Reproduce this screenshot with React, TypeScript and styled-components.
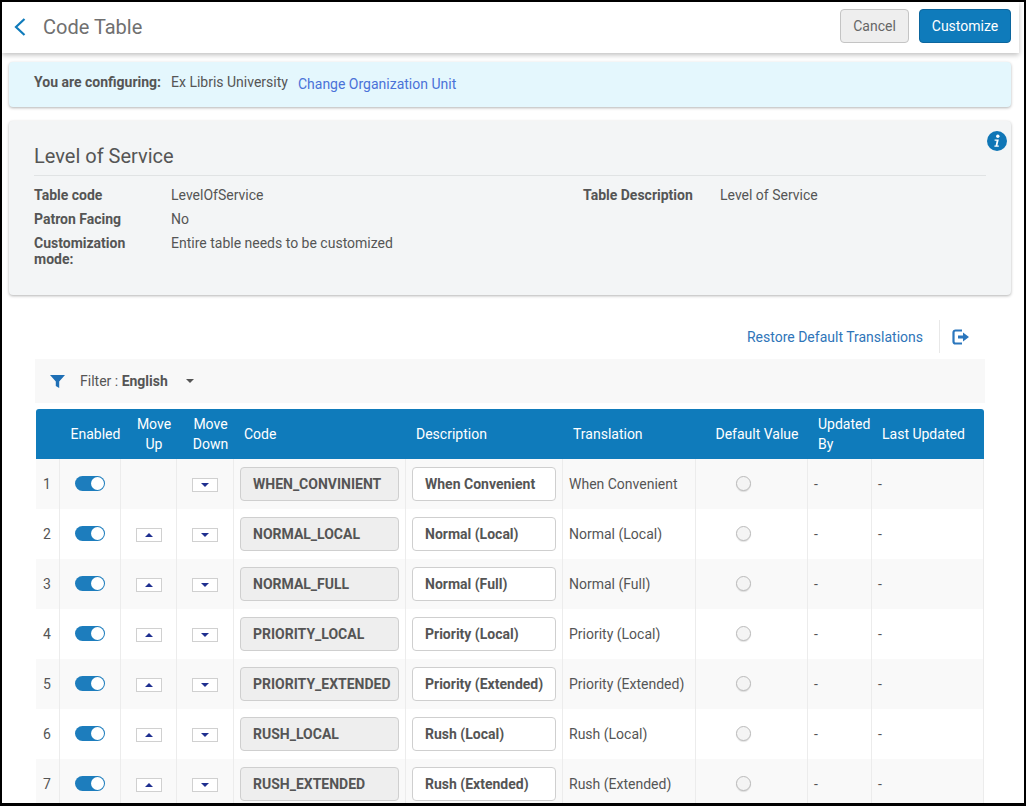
import React from "react"
import styled, { createGlobalStyle } from "styled-components"

const GlobalStyle = createGlobalStyle`
  html, body { margin: 0; padding: 0; background: #fff; }
  body { font-family: Roboto, "Liberation Sans", sans-serif; font-size: 14px; color: #555; }
  * { box-sizing: border-box; }
`

const rows = [
  { code: "WHEN_CONVINIENT", desc: "When Convenient", first: true },
  { code: "NORMAL_LOCAL", desc: "Normal (Local)" },
  { code: "NORMAL_FULL", desc: "Normal (Full)" },
  { code: "PRIORITY_LOCAL", desc: "Priority (Local)" },
  { code: "PRIORITY_EXTENDED", desc: "Priority (Extended)" },
  { code: "RUSH_LOCAL", desc: "Rush (Local)" },
  { code: "RUSH_EXTENDED", desc: "Rush (Extended)" },
]

const columnWidths = [24, 61, 56, 57, 172, 157, 133, 112, 64, 112]

export default function App() {
  return (
    <Frame>
      <GlobalStyle />
      <Page>
        <Header>
          <TitleGroup>
            <BackIcon viewBox="0 0 14 20" aria-hidden="true">
              <path d="M11.5 2 3 10l8.5 8" fill="none" stroke="#0f7bbb" strokeWidth="2.2" />
            </BackIcon>
            <Title>Code Table</Title>
          </TitleGroup>
          <Actions>
            <CancelButton>Cancel</CancelButton>
            <PrimaryButton>Customize</PrimaryButton>
          </Actions>
        </Header>

        <Banner>
          <BannerLabel>You are configuring:</BannerLabel>
          <BannerValue>Ex Libris University</BannerValue>
          <BannerLink>Change Organization Unit</BannerLink>
        </Banner>

        <InfoCard>
          <InfoIcon viewBox="0 0 20 20" aria-hidden="true">
            <circle cx="10" cy="10" r="10" fill="#0f76b6" />
            <circle cx="10.8" cy="5.2" r="1.7" fill="#fff" />
            <path d="M7.6 8.4h4.2l-1.4 6h1.4v1.3H7.4v-1.3h1.2l1-4.7H7.6z" fill="#fff" />
          </InfoIcon>
          <CardTitle>Level of Service</CardTitle>
          <DetailGrid>
            <DetailColumn>
              <DetailRow>
                <DetailLabel>Table code</DetailLabel>
                <span>LevelOfService</span>
              </DetailRow>
              <DetailRow>
                <DetailLabel>Patron Facing</DetailLabel>
                <span>No</span>
              </DetailRow>
              <DetailRow>
                <DetailLabel>Customization mode:</DetailLabel>
                <span>Entire table needs to be customized</span>
              </DetailRow>
            </DetailColumn>
            <DetailColumn>
              <DetailRow>
                <DetailLabel>Table Description</DetailLabel>
                <span>Level of Service</span>
              </DetailRow>
            </DetailColumn>
          </DetailGrid>
        </InfoCard>

        <ListSection>
          <ListToolbar>
            <RestoreLink>Restore Default Translations</RestoreLink>
            <ExportButton>
              <svg width="18" height="16" viewBox="0 0 18 16" aria-hidden="true">
                <path
                  d="M10 1.5H3.5a2 2 0 0 0-2 2v9a2 2 0 0 0 2 2H10"
                  fill="none"
                  stroke="#2a76bd"
                  strokeWidth="2.2"
                />
                <path d="M6 6.6h5V3.6L17 8l-6 4.4V9.4H6z" fill="#2a76bd" />
              </svg>
            </ExportButton>
          </ListToolbar>

          <FilterBar>
            <svg width="15" height="13" viewBox="0 0 15 13" aria-hidden="true">
              <path d="M0 0h15L9.2 6.5V13L5.8 11V6.5z" fill="#1f6fb5" />
            </svg>
            <FilterText>
              Filter : <strong>English</strong>
            </FilterText>
            <Caret />
          </FilterBar>

          <Table>
            <colgroup>
              {columnWidths.map((width, i) => (
                <col key={i} width={width} />
              ))}
            </colgroup>
            <thead>
              <tr>
                <HeadCell />
                <HeadCell $center>Enabled</HeadCell>
                <HeadCell $center>Move Up</HeadCell>
                <HeadCell $center>Move Down</HeadCell>
                <HeadCell>Code</HeadCell>
                <HeadCell>Description</HeadCell>
                <HeadCell>Translation</HeadCell>
                <HeadCell $center>Default Value</HeadCell>
                <HeadCell>Updated By</HeadCell>
                <HeadCell>Last Updated</HeadCell>
              </tr>
            </thead>
            <tbody>
              {rows.map((row, i) => (
                <Row key={row.code}>
                  <Cell>{i + 1}</Cell>
                  <Cell $center>
                    <Toggle />
                  </Cell>
                  <Cell $center>
                    {!row.first && (
                      <MoveButton aria-label="Move up">
                        <ArrowUp />
                      </MoveButton>
                    )}
                  </Cell>
                  <Cell $center>
                    <MoveButton aria-label="Move down">
                      <ArrowDown />
                    </MoveButton>
                  </Cell>
                  <Cell>
                    <CodeBox>{row.code}</CodeBox>
                  </Cell>
                  <Cell>
                    <DescriptionBox>{row.desc}</DescriptionBox>
                  </Cell>
                  <Cell>{row.desc}</Cell>
                  <Cell $center>
                    <Radio />
                  </Cell>
                  <Cell>-</Cell>
                  <Cell>-</Cell>
                </Row>
              ))}
            </tbody>
          </Table>
        </ListSection>
      </Page>
    </Frame>
  )
}

const Frame = styled.div`
  width: 1026px;
  height: 806px;
  overflow: hidden;
  border: 2px solid #000;
  border-bottom-width: 3px;
  background: #fff;
`
const Page = styled.div`
  width: 1017px;
`
const Header = styled.header`
  height: 51px;
  padding: 0 8px 0 11px;
  display: flex;
  align-items: center;
  justify-content: space-between;
  background: #fff;
  box-shadow: 0 2px 5px rgba(0, 0, 0, 0.25);
`
const TitleGroup = styled.div`
  display: flex;
  align-items: center;
  gap: 16px;
  margin-top: -2px;
`
const BackIcon = styled.svg`
  width: 14px;
  height: 20px;
`
const Title = styled.h1`
  margin: 0;
  font-size: 20px;
  font-weight: 400;
  color: #707070;
`
const Actions = styled.div`
  display: flex;
  gap: 10px;
  margin-top: -3px;
`
const CancelButton = styled.button`
  width: 69px;
  height: 34px;
  padding: 0;
  border: 1px solid #c4c4c4;
  border-radius: 4px;
  background: #eee;
  color: #666;
  font: 400 14px Roboto, sans-serif;
`
const PrimaryButton = styled(CancelButton)`
  width: 92px;
  border-color: #0c669e;
  background: #0f7bbb;
  color: #fff;
`
const Banner = styled.div`
  margin: 9px 8px 0 7px;
  height: 45px;
  padding: 0 25px;
  display: flex;
  align-items: center;
  border-radius: 4px;
  background: #e4f7fd;
  box-shadow: 0 1px 3px rgba(0, 0, 0, 0.3);
`
const BannerLabel = styled.span`
  width: 137px;
  margin-top: -6px;
  font-weight: 700;
`
const BannerValue = styled.span`
  margin-top: -6px;
`
const BannerLink = styled.a`
  margin-left: 10px;
  margin-top: -2px;
  color: #4a72d8;
`
const InfoCard = styled.section`
  position: relative;
  margin: 14px 8px 0 7px;
  height: 174px;
  padding: 24px 25px 0;
  border-radius: 4px;
  background: #f3f5f6;
  box-shadow: 0 1px 3px rgba(0, 0, 0, 0.3);
`
const InfoIcon = styled.svg`
  position: absolute;
  top: 10px;
  right: 4px;
  width: 20px;
  height: 20px;
`
const CardTitle = styled.h2`
  margin: 0;
  padding-bottom: 7px;
  border-bottom: 1px solid #e0e3e4;
  font-size: 20px;
  line-height: 23px;
  font-weight: 400;
  color: #555;
`
const DetailGrid = styled.div`
  display: grid;
  grid-template-columns: 549px 1fr;
  padding-top: 11px;
`
const DetailColumn = styled.div`
  display: flex;
  flex-direction: column;
  gap: 8px;
`
const DetailRow = styled.div`
  display: grid;
  grid-template-columns: 137px 1fr;
  line-height: 16px;
`
const DetailLabel = styled.span`
  font-weight: 700;
  padding-right: 20px;
`
const ListSection = styled.div`
  padding: 0 32px 0 33px;
`
const ListToolbar = styled.div`
  height: 64px;
  padding: 25px 2px 6px 0;
  display: flex;
  align-items: center;
  justify-content: flex-end;
`
const RestoreLink = styled.a`
  color: #2f75b9;
`
const ExportButton = styled.div`
  margin-left: 16px;
  width: 46px;
  height: 33px;
  padding-left: 12px;
  display: flex;
  align-items: center;
  border-left: 1px solid #e8e8e8;
`
const FilterBar = styled.div`
  height: 44px;
  margin-right: 2px;
  padding-left: 15px;
  display: flex;
  align-items: center;
  background: #f8f8f8;
`
const FilterText = styled.span`
  margin-left: 15px;
  strong {
    font-weight: 700;
  }
`
const Caret = styled.span`
  margin-left: 18px;
  width: 0;
  height: 0;
  border-left: 4px solid transparent;
  border-right: 4px solid transparent;
  border-top: 4px solid #555;
`
const Table = styled.table`
  width: 948px;
  margin: 6px 0 0 1px;
  border-collapse: separate;
  border-spacing: 0;
  table-layout: fixed;
`
const HeadCell = styled.th<{ $center?: boolean }>`
  height: 50px;
  padding: 0 ${(p) => (p.$center ? "0 0 10px" : "10px")};
  background: #0f7bbb;
  color: #fff;
  font-weight: 400;
  line-height: 20px;
  text-align: ${(p) => (p.$center ? "center" : "left")};
  &:first-child {
    border-top-left-radius: 3px;
  }
  &:last-child {
    border-top-right-radius: 3px;
  }
`
const Row = styled.tr`
  &:nth-child(odd) td {
    background: #f9f9f9;
  }
`
const Cell = styled.td<{ $center?: boolean }>`
  height: 50px;
  padding: 0 ${(p) => (p.$center ? "0" : "6px")};
  border-right: 1px solid #ececec;
  text-align: ${(p) => (p.$center ? "center" : "left")};
  vertical-align: middle;
  &:first-child {
    padding-left: 7px;
    padding-right: 0;
  }
`
const Toggle = styled.span`
  position: relative;
  top: -1px;
  display: inline-block;
  width: 30px;
  height: 15px;
  border-radius: 8px;
  background: #1d7dbd;
  vertical-align: middle;
  &::after {
    content: "";
    position: absolute;
    top: 1px;
    right: 1px;
    width: 13px;
    height: 13px;
    border-radius: 50%;
    background: #fff;
  }
`
const MoveButton = styled.span`
  display: inline-flex;
  align-items: center;
  justify-content: center;
  width: 26px;
  height: 14px;
  border: 1px solid #d0d0d0;
  background: #fff;
  vertical-align: middle;
`
const ArrowUp = styled.span`
  width: 0;
  height: 0;
  border-left: 4px solid transparent;
  border-right: 4px solid transparent;
  border-bottom: 4px solid #1f2f8f;
`
const ArrowDown = styled.span`
  width: 0;
  height: 0;
  border-left: 4px solid transparent;
  border-right: 4px solid transparent;
  border-top: 4px solid #1f2f8f;
`
const CodeBox = styled.div`
  width: 159px;
  height: 34px;
  padding-left: 12px;
  display: flex;
  align-items: center;
  white-space: nowrap;
  border: 1px solid #cfcfcf;
  border-radius: 4px;
  background: #eee;
  font-weight: 700;
  color: #555;
`
const DescriptionBox = styled(CodeBox)`
  width: 144px;
  background: #fff;
`
const Radio = styled.span`
  position: relative;
  top: -1px;
  display: inline-block;
  width: 15px;
  height: 15px;
  margin-right: 16px;
  border: 1px solid #bbb;
  border-radius: 50%;
  background: #f4f4f4;
  box-shadow: 0 1px 1px rgba(0, 0, 0, 0.12);
  vertical-align: middle;
`
